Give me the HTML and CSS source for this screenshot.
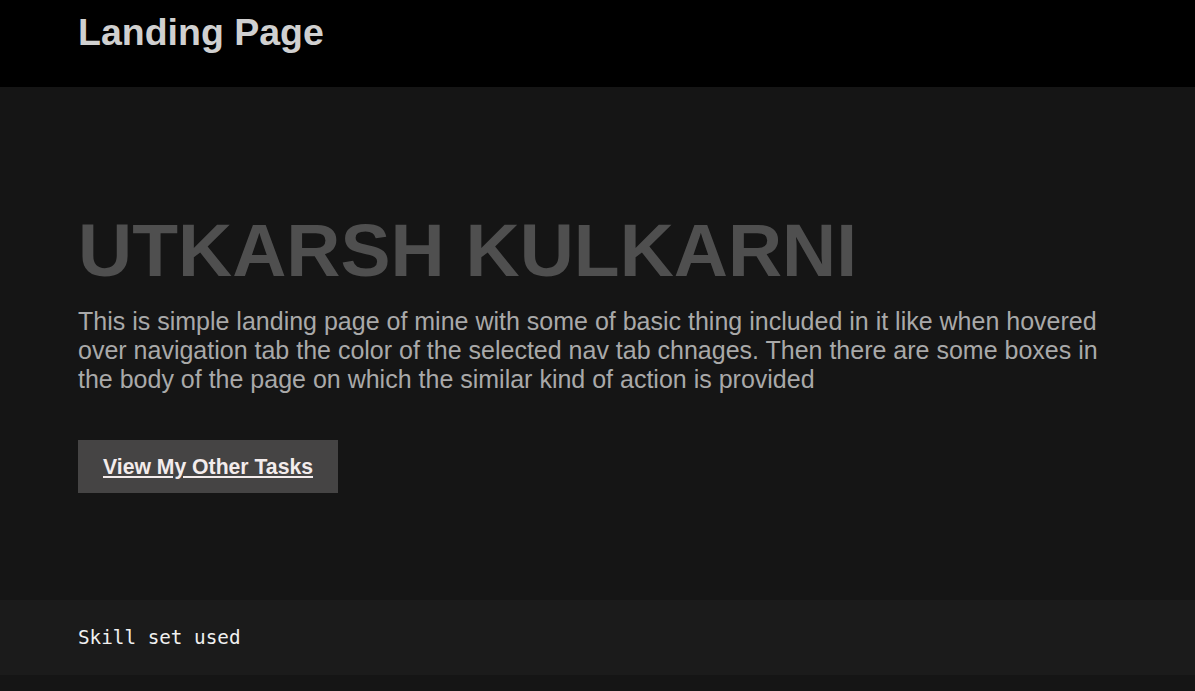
FILE: index.html
```html
<!DOCTYPE html>
<html>
<head>
<meta charset="utf-8">
<title>Landing Page</title>
<link rel="stylesheet" href="styles.css">
</head>
<body>
<header class="topbar">
  <h1 class="brand">Landing Page</h1>
</header>
<main class="hero">
  <h2 class="hero-title">UTKARSH KULKARNI</h2>
  <p class="hero-text">This is simple landing page of mine with some of basic thing included in it like when hovered over navigation tab the color of the selected nav tab chnages. Then there are some boxes in the body of the page on which the similar kind of action is provided</p>
  <a class="hero-btn" href="#">View My Other Tasks</a>
</main>
<section class="skills">
  <p class="skills-title">Skill set used</p>
</section>
</body>
</html>
```
FILE: styles.css
```css
html, body {
  margin: 0;
  padding: 0;
  background: #151515;
  font-family: "Liberation Sans", Arial, sans-serif;
}
.topbar {
  background: #000;
  height: 87px;
  padding: 11px 78px 0;
  box-sizing: border-box;
}
.brand {
  margin: 0;
  font-size: 37.5px;
  font-weight: bold;
  color: #d0d0d0;
}
.hero {
  background: #151515;
  height: 513px;
  box-sizing: border-box;
  padding: 120px 78px 0;
}
.hero-title {
  margin: 0;
  font-size: 75px;
  font-weight: bold;
  color: #4f4f4f;
}
.hero-text {
  margin: 14px 0 0;
  font-size: 25px;
  line-height: 29px;
  color: #a9a9a9;
}
.hero-btn {
  display: inline-block;
  margin-top: 46px;
  background: #454444;
  color: #f3ecec;
  font-size: 21.2px;
  font-weight: bold;
  padding: 15px 25px;
  line-height: 23px;
}
.skills {
  background: #1b1b1b;
  height: 75px;
  padding: 0 78px;
  box-sizing: border-box;
  display: flex;
  align-items: center;
}
.skills-title {
  margin: 0;
  font-family: "DejaVu Sans Mono", monospace;
  font-size: 19.3px;
  color: #f0f0f0;
}
```
